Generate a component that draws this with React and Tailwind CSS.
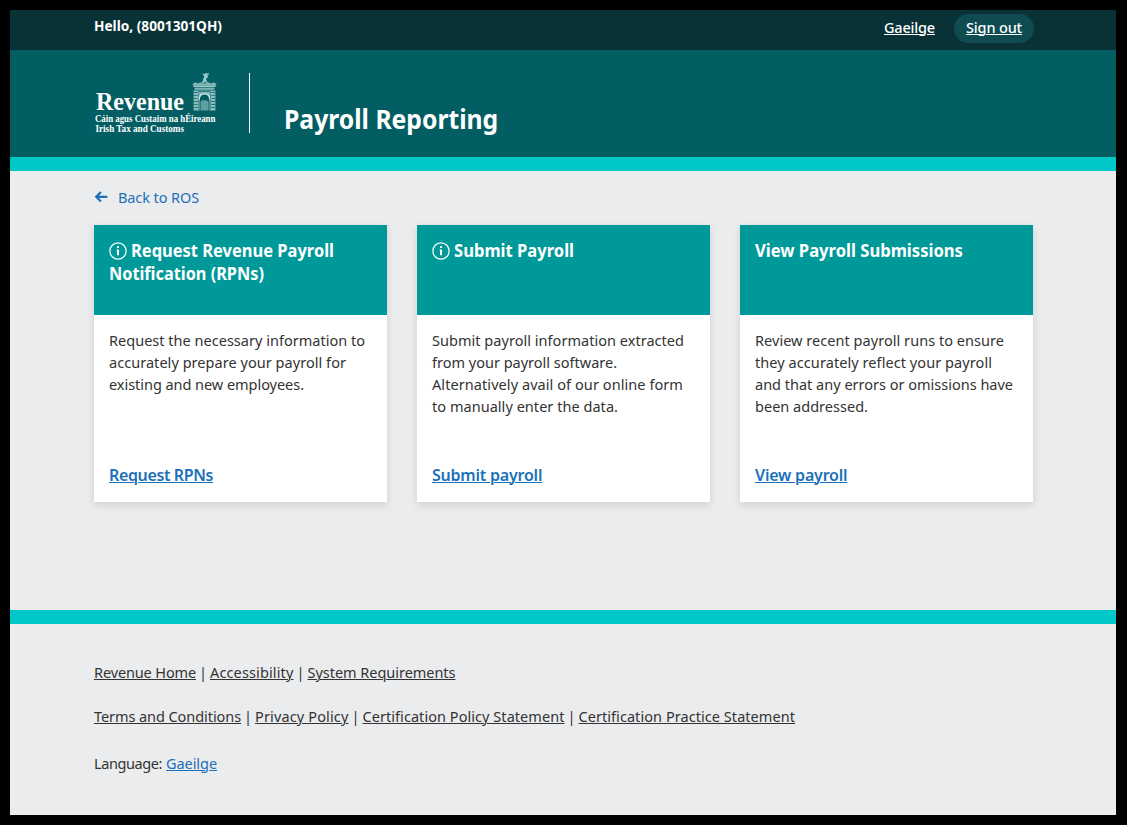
import React from 'react';

const CARDS = [
  {
    info: true,
    title: [
      ['Request Revenue Payroll', 'scale-x-[0.915]'],
      ['Notification (RPNs)', 'scale-x-[0.905]'],
    ],
    body: [
      ['Request the necessary information to', 'tracking-[0.016px]'],
      ['accurately prepare your payroll for', 'tracking-[0.044px]'],
      ['existing and new employees.', 'tracking-[-0.042px]'],
    ],
    link: ['Request RPNs', 'tracking-[-0.37px]'],
  },
  {
    info: true,
    title: [['Submit Payroll', 'scale-x-[0.921]']],
    body: [
      ['Submit payroll information extracted', 'tracking-[0.032px]'],
      ['from your payroll software.', 'tracking-[0px]'],
      ['Alternatively avail of our online form', 'tracking-[0.072px]'],
      ['to manually enter the data.', 'tracking-[0.039px]'],
    ],
    link: ['Submit payroll', 'tracking-[-0.22px]'],
  },
  {
    info: false,
    title: [['View Payroll Submissions', 'scale-x-[0.922]']],
    body: [
      ['Review recent payroll runs to ensure', 'tracking-[0.04px]'],
      ['they accurately reflect your payroll', 'tracking-[0.071px]'],
      ['and that any errors or omissions have', 'tracking-[0px]'],
      ['been addressed.', 'tracking-[0.018px]'],
    ],
    link: ['View payroll', 'tracking-[-0.2px]'],
  },
];

const FOOTER_LINKS = [
  [
    ['Revenue Home', 'tracking-[-0.132px]'],
    ['Accessibility', 'tracking-[0.133px]'],
    ['System Requirements', 'tracking-[-0.033px]'],
  ],
  [
    ['Terms and Conditions', 'tracking-[-0.074px]'],
    ['Privacy Policy', 'tracking-[0.142px]'],
    ['Certification Policy Statement', 'tracking-[0.052px]'],
    ['Certification Practice Statement', 'tracking-[0.055px]'],
  ],
];

function InfoIcon() {
  return (
    <svg width="18" height="18" viewBox="0 0 18 18" className="mt-[3px] mr-[3.5px] shrink-0">
      <circle cx="9" cy="9" r="8.1" fill="none" stroke="#fff" strokeWidth="1.2" />
      <rect x="8" y="4" width="2" height="2.1" rx="0.5" fill="#fff" />
      <path d="M7.6 7.4H10v5.8H8V8.4h-.4z" fill="#fff" />
    </svg>
  );
}

// Custom House gateway emblem
function Gateway() {
  return (
    <svg width="25" height="39" viewBox="0 0 25 39" fill="#9ccbcb">
      <path d="M10.4.8l1.9 1.6 1-1.4 1.2.6 2.5-.3-.5 1.7-1.4.5 1.5 1.9-1.8.3-.7 1 .5 2 1.3 2.4h-1.8l-1.2-1.8-1.2 1.8H9.6l1.5-2.6.3-2.3 1-1.5-1.2-1.6z" />
      <path d="M.4 12.8c.5-1.6 1.8-2.6 4-2.3l.6 1 4.2-1.2 1 1h4.6l1-1 4.2 1.2.6-1c2.2-.3 3.5.7 4 2.3l-1.3.8H1.7z" opacity=".8" />
      <path d="M1.4 13.6h22.2v1.2H1.4z" fill="#c6e0e0" />
      <path d="M2.6 15.6h19.8v2.2H2.6z" opacity=".8" />
      <path d="M1.6 18.4h21.8v20.2h-6V28.2c0-3.4-1.9-5.8-4.9-5.8s-4.9 2.4-4.9 5.8v10.4h-6z" opacity=".88" />
      <path d="M7.3 27.8c0-3.6 2-6 5.2-6s5.2 2.4 5.2 6" fill="none" stroke="#dcecec" strokeWidth="1.1" />
      <path d="M8.5 29.6c1-.9 2.2-1.3 4-1.3s3 .4 4 1.3v9h-8z" opacity=".6" />
      <path d="M1.6 20.5h4.2M1.6 23.5h3.9M1.6 26.5h3.7M1.6 29.5h4.2M1.6 32.5h4.2M1.6 35.5h4.2M19.2 20.5h4.2M19.5 23.5h3.9M19.7 26.5h3.7M19.2 29.5h4.2M19.2 32.5h4.2M19.2 35.5h4.2M7 19.6h11" stroke="#1d7073" strokeWidth=".9" />
      <path d="M6.6 18.4v20M18.4 18.4v20" stroke="#2c7b7e" strokeWidth=".7" />
    </svg>
  );
}

function Logo() {
  return (
    <div className="flex h-[62px] w-[124px] flex-col font-['Liberation_Serif',serif] font-bold whitespace-nowrap text-white">
      <div className="flex h-[40px] items-start pl-[2px]">
        <span className="mt-[15px] block w-[96px] origin-left scale-x-[0.923] text-[26px] leading-[30px]">Revenue</span>
        <Gateway />
      </div>
      <span className="mt-px block h-[10px] origin-left scale-x-[0.929] pl-[1px] text-[9.5px] leading-[13px]">Cáin agus Custaim na hÉireann</span>
      <span className="block h-[10px] origin-left scale-x-[0.961] pl-[1.5px] text-[9.5px] leading-[13px]">Irish Tax and Customs</span>
    </div>
  );
}

function Card({ info, title, body, link }) {
  return (
    <article className="flex h-[277px] w-[293px] flex-col bg-white shadow-[0_3px_8px_rgba(0,0,0,0.12)]">
      <header className="flex h-[90px] flex-col bg-[#009999] px-[15px] pt-[14px] text-[18px] leading-[23px] font-bold text-white">
        {title.map(([text, scale], i) => (
          <div key={text} className="flex h-[23px] items-start">
            {i === 0 && info && <InfoIcon />}
            <span className={'origin-left ' + scale}>{text}</span>
          </div>
        ))}
      </header>
      <div className="flex flex-1 flex-col px-[15px] pt-[14px] text-[14.5px] leading-[22px]">
        {body.map(([text, tracking]) => (
          <span key={text} className={tracking}>{text}</span>
        ))}
      </div>
      <div className="h-[38px] px-[15px] text-[16px] leading-[22px] font-semibold">
        <a href="#" className={'text-[#1b70b8] underline decoration-1 underline-offset-[1px] ' + link[1]}>{link[0]}</a>
      </div>
    </article>
  );
}

export default function App() {
  return (
    <div className="h-[825px] w-[1127px] overflow-hidden bg-black py-[10px] pr-[11px] pl-[10px] font-['Noto_Sans',sans-serif] text-[14.5px] leading-[22px] whitespace-nowrap text-[#333]">
      <div className="flex h-[805px] flex-col bg-[#ebecee]">
        <div className="flex h-[40px] items-start justify-between bg-[#083236] pr-[82px] pl-[84px] text-white">
          <span className="mt-[5px] origin-left scale-x-[0.976] text-[14px] font-bold">Hello, (8001301QH)</span>
          <div className="flex items-start font-medium">
            <a href="#" className="mt-[6px] mr-[19px] tracking-[-0.188px] underline decoration-1 underline-offset-[1px]">Gaeilge</a>
            <a href="#" className="mt-[4px] flex h-[29px] w-[80px] justify-center rounded-full bg-[#0f4b50] pt-[2px] tracking-[-0.156px] underline decoration-1 underline-offset-[1px]">Sign out</a>
          </div>
        </div>

        <header className="flex h-[107px] items-start bg-[#025e62] pt-[23px] pl-[84px]">
          <div className="-mt-[1px]"><Logo /></div>
          <div className="ml-[31px] h-[60px] w-px bg-white" />
          <h1 className="mt-[28px] ml-[34px] origin-left scale-x-[0.915] text-[27px] leading-[36px] font-bold text-white">Payroll Reporting</h1>
        </header>
        <div className="h-[14px] bg-[#00c8c8]" />

        <main className="flex h-[439px] flex-col pl-[84px]">
          <a href="#" className="mt-[15px] flex h-[22px] items-start text-[#1b70b8]">
            <svg width="14" height="12" viewBox="0 0 14 12" className="mt-[5px] mr-[10px]" fill="none" stroke="#1b70b8" strokeWidth="2.2">
              <path d="M6.9 1L2.2 5.8l4.7 4.8M2.4 5.8H13.4" />
            </svg>
            <span className="tracking-[-0.1px]">Back to ROS</span>
          </a>
          <section className="mt-[17px] flex gap-[30px]">
            {CARDS.map((card) => (
              <Card key={card.link[0]} {...card} />
            ))}
          </section>
        </main>
        <div className="h-[14px] bg-[#00c8c8]" />

        <footer className="flex flex-col pt-[37px] pl-[84px]">
          {FOOTER_LINKS.map((row, r) => (
            <nav key={r} className="mb-[22px] flex h-[22px]">
              {row.map(([text, tracking], i) => (
                <React.Fragment key={text}>
                  {i > 0 && <span className="w-[14px] text-center">|</span>}
                  <a href="#" className={'underline decoration-1 underline-offset-[1px] ' + tracking}>{text}</a>
                </React.Fragment>
              ))}
            </nav>
          ))}
          <div className="mt-[3px] flex">
            <span className="w-[72px] tracking-[-0.41px]">Language:</span>
            <a href="#" className="tracking-[-0.065px] text-[#1b70b8] underline decoration-1 underline-offset-[1px]">Gaeilge</a>
          </div>
        </footer>
      </div>
    </div>
  );
}
